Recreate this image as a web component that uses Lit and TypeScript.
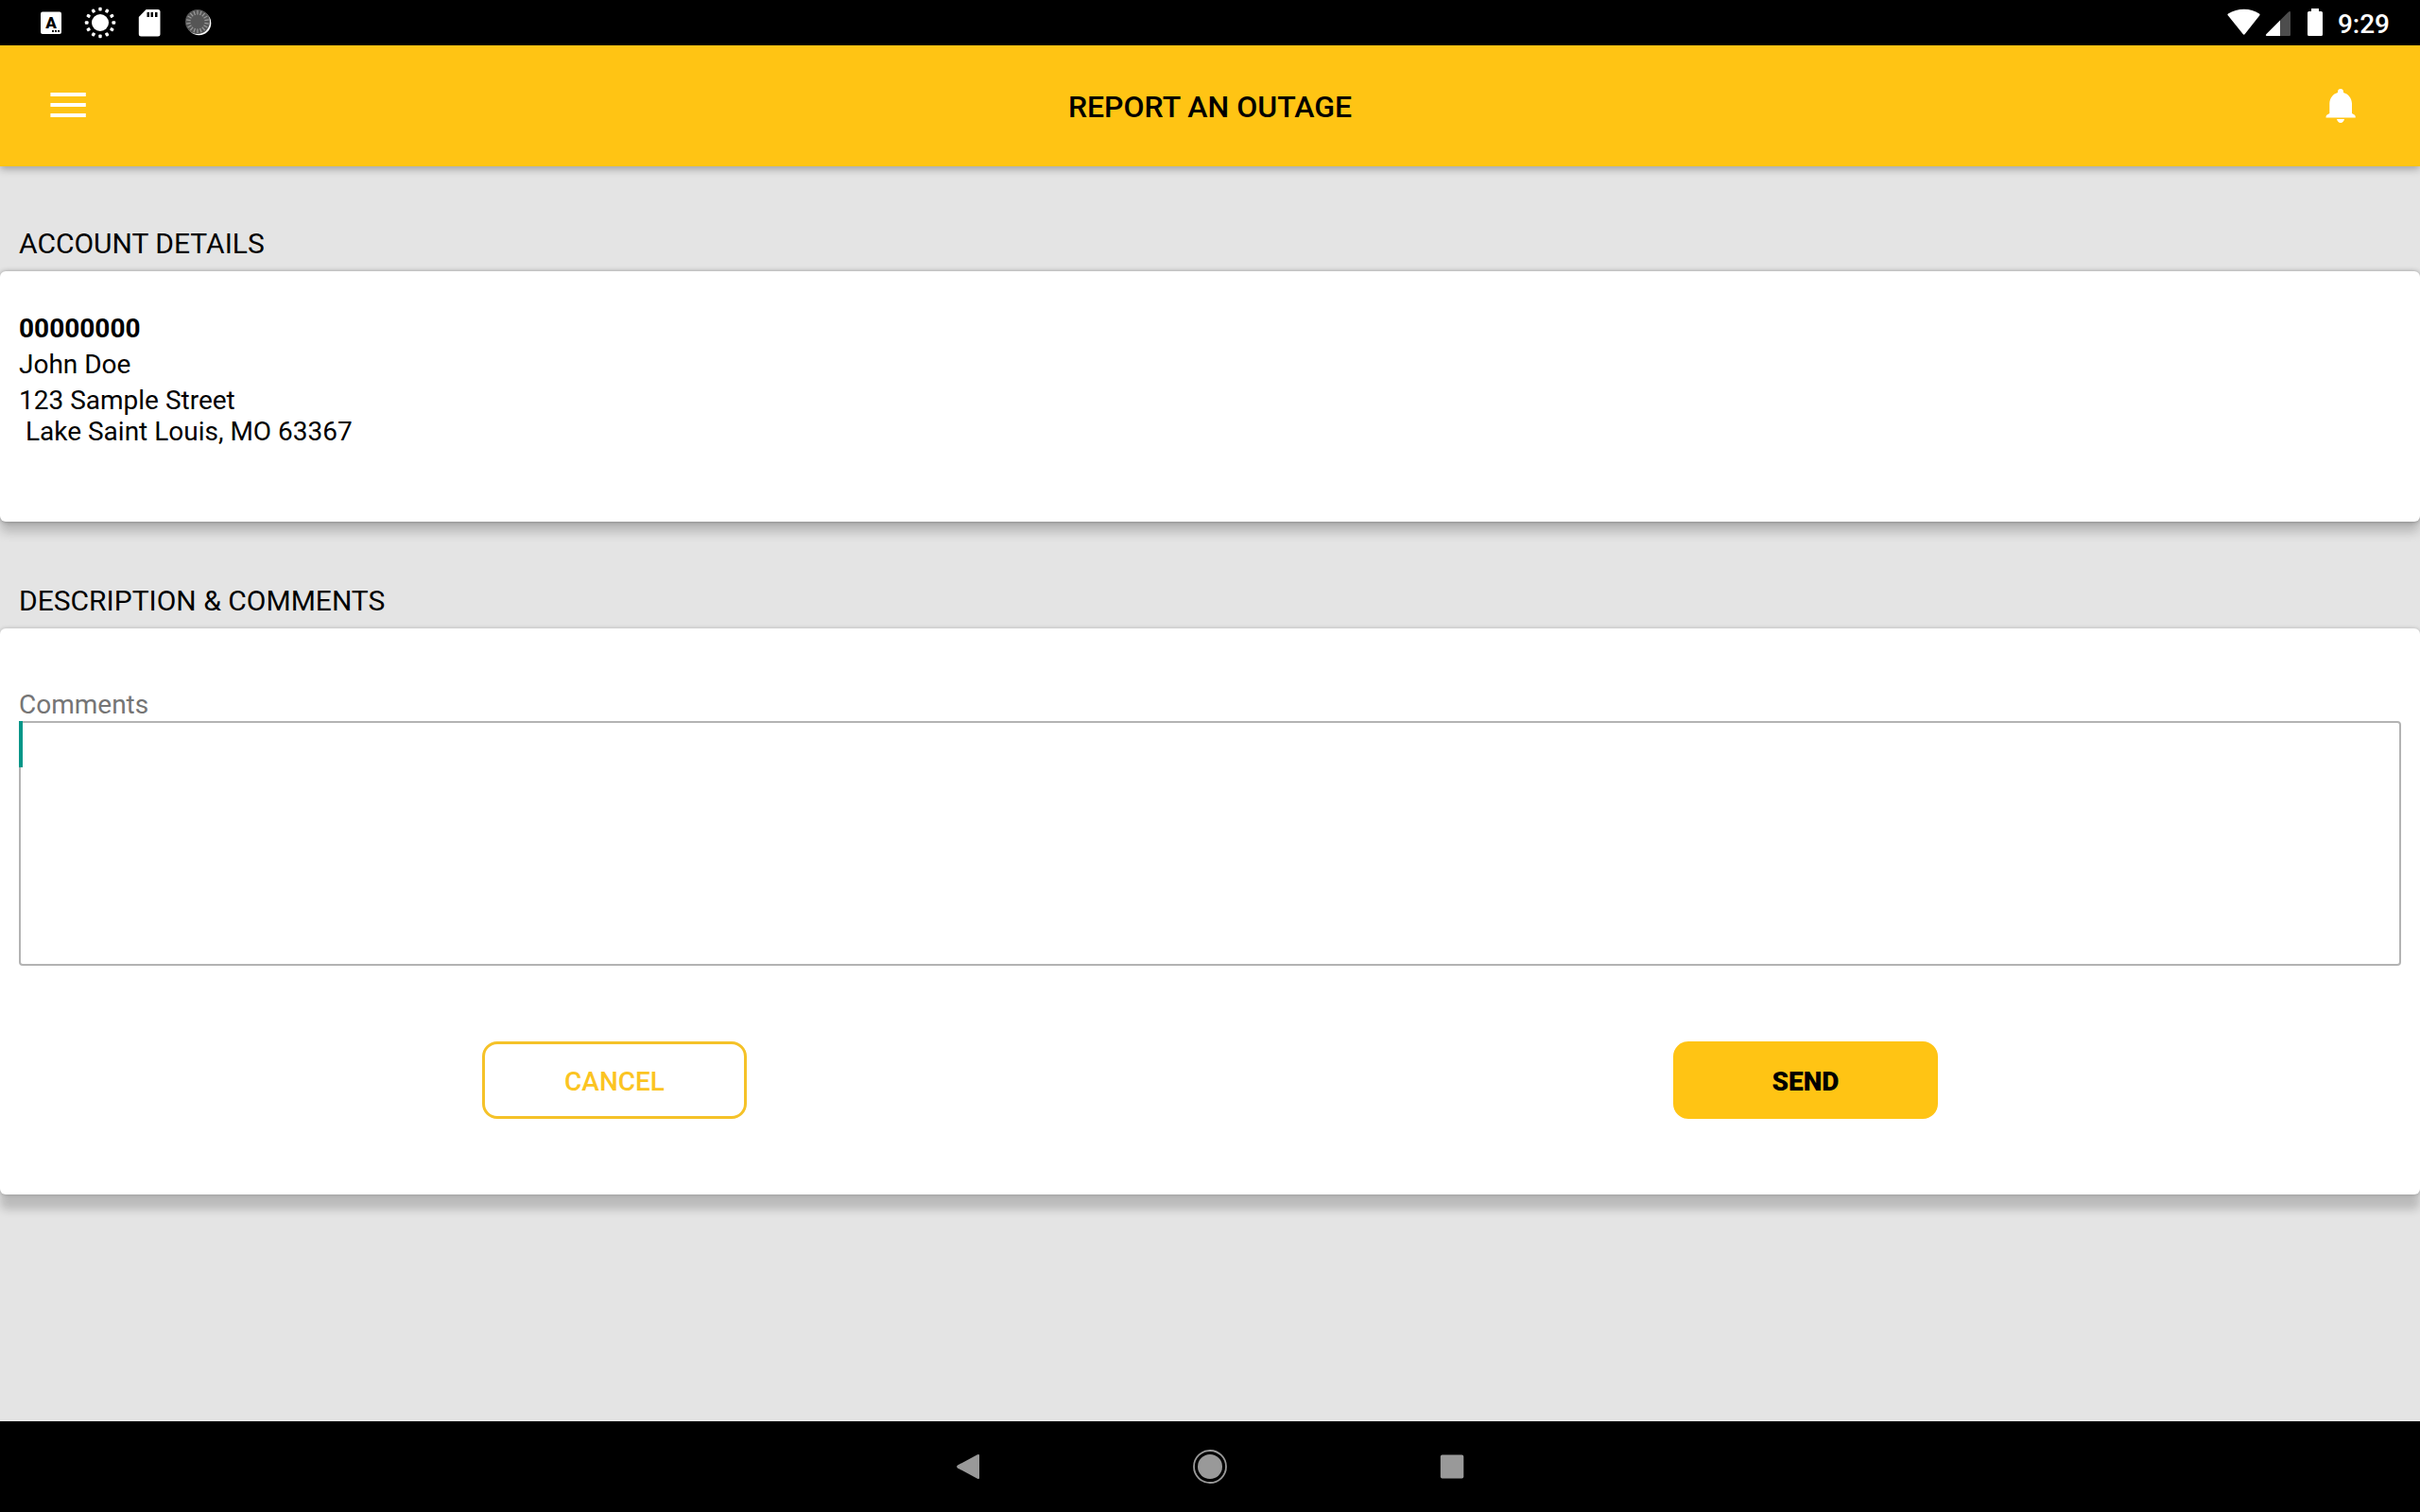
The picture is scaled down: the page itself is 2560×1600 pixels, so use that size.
import { LitElement, html, css, svg } from "lit";
import { customElement, state } from "lit/decorators.js";

const SUN_RAYS = Array.from({ length: 12 }, (_, i) => i * 30);
const MOON_RAYS = Array.from({ length: 18 }, (_, i) => i * 20);

@customElement("status-bar")
class StatusBar extends LitElement {
  static styles = css`
    :host {
      display: block;
      background: #000;
      color: #fff;
    }
    .bar {
      display: flex;
      justify-content: space-between;
      align-items: center;
      height: 48px;
      padding: 0 32px 0 36px;
    }
    .left {
      display: flex;
      gap: 16px;
    }
    .right {
      display: flex;
      align-items: center;
      gap: 4px;
    }
    svg {
      display: block;
    }
    .letter {
      font: 900 17px Roboto, sans-serif;
    }
    .time {
      margin-left: 11px;
      padding-top: 2px;
      font-size: 28px;
      line-height: 33px;
      font-weight: 500;
    }
  `;

  render() {
    return html`
      <div class="bar">
        <div class="left">
          <svg width="36" height="36" viewBox="0 0 36 36" aria-hidden="true">
            <rect x="7" y="6.500" width="22" height="23.500" rx="2" fill="#fff" />
            <text class="letter" x="18" y="23.500" text-anchor="middle" fill="#000">A</text>
            <path d="M19 26h2v2h-2zM22 26h2v2h-2zM25 26h2v2h-2z" fill="#000" />
          </svg>
          <svg width="36" height="36" viewBox="0 0 36 36" aria-hidden="true">
            <circle cx="18" cy="18" r="9" fill="#fff" />
            ${SUN_RAYS.map(
              (a) => svg`<rect x="16.3" y="1.8" width="3.4" height="3.8" rx="1" fill="#fff" transform="rotate(${a} 18 18)"/>`
            )}
          </svg>
          <svg width="36" height="36" viewBox="0 0 36 36" aria-hidden="true">
            <path d="M14.600 4H27a2.500 2.500 0 0 1 2.500 2.500V30a2.500 2.500 0 0 1-2.500 2.500H9.300A2.500 2.500 0 0 1 6.800 30V12z" fill="#fff" />
            <path d="M15.500 7h2.500v5h-2.500zM19.500 7H22v5h-2.500zM24 7h2.500v5H24z" fill="#000" />
          </svg>
          <svg width="36" height="36" viewBox="0 0 36 36" aria-hidden="true">
            <circle cx="18.500" cy="18.500" r="12.800" fill="#fff" />
            <circle cx="17" cy="17" r="13" fill="#555" />
            ${MOON_RAYS.map(
              (a) => svg`<path d="M17 5v4.500" stroke="#999" stroke-width="1.200" transform="rotate(${a} 17 17)"/>`
            )}
          </svg>
        </div>
        <div class="right">
          <svg width="36" height="36" viewBox="0 0 36 36" aria-hidden="true">
            <path d="M1 10.500C.2 9.800.3 9 1 8.500 11 2.200 25 2.200 34 8.500c.8.600.8 1.200.2 2L18.600 30.300c-.5.600-1.200.600-1.700 0z" fill="#fff" />
          </svg>
          <svg width="40" height="36" viewBox="0 0 40 36" aria-hidden="true">
            <path d="M16 15.500 24.500 7q2.500-2 2.500.5V31a1 1 0 0 1-1 1H16z" fill="#4d4d4d" />
            <path d="M16 15.500V32H2q-2-.2-.5-2z" fill="#fff" />
          </svg>
          <svg width="18" height="36" viewBox="0 0 18 36" aria-hidden="true">
            <path d="M5 3h8v3h2.500A1.500 1.500 0 0 1 17 7.500v23a1.500 1.500 0 0 1-1.500 1.500h-13A1.500 1.500 0 0 1 1 30.500v-23A1.500 1.500 0 0 1 2.500 6H5z" fill="#fff" />
          </svg>
          <span class="time">9:29</span>
        </div>
      </div>
    `;
  }
}

@customElement("title-bar")
class TitleBar extends LitElement {
  static styles = css`
    :host {
      display: block;
      position: relative;
      background: #ffc414;
      box-shadow: 0 3px 8px rgba(0, 0, 0, 0.3);
    }
    .bar {
      display: grid;
      grid-template-columns: 80px 1fr 80px;
      align-items: center;
      height: 128px;
      padding: 0 32px;
    }
    .title {
      margin: 0;
      padding-top: 2px;
      text-align: center;
      font-size: 32px;
      line-height: 38px;
      font-weight: 500;
      color: #000;
    }
    .icon {
      display: block;
      width: 80px;
      height: 80px;
      padding: 0;
      border: 0;
      background: none;
      cursor: pointer;
    }
    svg {
      display: block;
    }
  `;

  render() {
    return html`
      <header class="bar">
        <button class="icon" type="button" aria-label="Menu">
          <svg width="80" height="80" viewBox="0 0 80 80">
            <path d="M21.400 26h37.400v4H21.400zM21.400 37h37.400v4H21.400zM21.400 48h37.400v4H21.400z" fill="#fff" />
          </svg>
        </button>
        <h1 class="title">REPORT AN OUTAGE</h1>
        <button class="icon" type="button" aria-label="Notifications">
          <svg width="80" height="80" viewBox="0 0 80 80">
            <path d="M28 22c1.800 0 3 1.300 3 3v.9c5.200 1.400 8.800 5.800 9 11.600V48l2.600 1.600c.8.600 1.200 1.400 1.200 2.900H12.500c0-1.500.4-2.300 1.200-2.900L16.300 48V37.500c.2-5.800 3.600-10.200 8.700-11.600V25c0-1.700 1.200-3 3-3z" fill="#fff" />
            <path d="M24 54h8c-.4 2.400-2 3.900-4 3.900s-3.600-1.500-4-3.900z" fill="#fff" />
          </svg>
        </button>
      </header>
    `;
  }
}

@customElement("nav-bar")
class NavBar extends LitElement {
  static styles = css`
    :host {
      display: block;
      background: #000;
    }
    .bar {
      display: flex;
      justify-content: center;
      align-items: center;
      gap: 176px;
      height: 96px;
    }
    .key {
      width: 80px;
      height: 80px;
      padding: 0;
      border: 0;
      background: none;
      cursor: pointer;
    }
    svg {
      display: block;
    }
  `;

  render() {
    return html`
      <nav class="bar">
        <button class="key" type="button" aria-label="Back">
          <svg width="80" height="80" viewBox="0 0 80 80">
            <path d="M29 38.500 50 27.300q2-.8 2 .8v23.800q0 1.600-2 .8L29 41.500q-1.800-1.500 0-3z" fill="#999" />
          </svg>
        </button>
        <button class="key" type="button" aria-label="Home">
          <svg width="80" height="80" viewBox="0 0 80 80">
            <circle cx="40" cy="40" r="17" fill="none" stroke="#999" stroke-width="1.800" />
            <circle cx="40" cy="40" r="13" fill="#999" />
          </svg>
        </button>
        <button class="key" type="button" aria-label="Overview">
          <svg width="80" height="80" viewBox="0 0 80 80">
            <rect x="27.800" y="27.500" width="24.500" height="25" rx="2" fill="#999" />
          </svg>
        </button>
      </nav>
    `;
  }
}

@customElement("app-root")
class AppRoot extends LitElement {
  static styles = css`
    :host {
      display: flex;
      flex-direction: column;
      min-height: 100vh;
      background: #e4e4e4;
      color: #000;
      font-family: Roboto, sans-serif;
    }
    .content {
      flex: 1;
      padding-top: 64px;
    }
    .section {
      margin-bottom: 66px;
    }
    .heading {
      margin: 0;
      padding: 0 20px 12px;
      font-size: 30px;
      line-height: 35px;
      font-weight: 400;
    }
    .card {
      background: #fff;
      border-radius: 6px;
      font-size: 28px;
      line-height: 33px;
    }
    .account {
      padding: 44px 20px 79px;
      box-shadow:
        0 0 5px rgba(0, 0, 0, 0.35),
        0 11px 12px rgba(0, 0, 0, 0.2);
    }
    .number,
    .name,
    .address {
      margin: 0 0 5px;
    }
    .number {
      font-weight: 700;
    }
    .address {
      margin: 0;
    }
    .form {
      padding: 64px 20px 80px;
      box-shadow:
        0 0 4px rgba(0, 0, 0, 0.22),
        0 16px 10px rgba(0, 0, 0, 0.18);
    }
    .label {
      display: block;
      padding-bottom: 1px;
      color: #757575;
    }
    .field {
      position: relative;
      display: flex;
    }
    .comments {
      flex: 1;
      height: 259px;
      box-sizing: border-box;
      padding: 8px;
      border: 2px solid #b3b3b3;
      border-radius: 4px;
      outline: none;
      resize: none;
      background: #fff;
      color: #000;
      font: 28px/33px Roboto, sans-serif;
      caret-color: #009688;
    }
    .caret {
      position: absolute;
      top: 0;
      left: 0;
      width: 4px;
      height: 49px;
      background: #009688;
      pointer-events: none;
    }
    .actions {
      display: grid;
      grid-template-columns: 1fr 1fr;
      justify-items: center;
      padding-top: 80px;
    }
    .action {
      width: 280px;
      height: 82px;
      padding: 2px 0 0;
      border: 3px solid #ffc414;
      border-radius: 16px;
      font: 500 28px/33px Roboto, sans-serif;
      cursor: pointer;
    }
    .cancel {
      background: #fff;
      border-color: #f5c228;
      color: #fbc422;
    }
    .send {
      background: #ffc414;
      color: #000;
      font-weight: 900;
    }
  `;

  @state() private comments = "";

  private onInput(e: Event) {
    this.comments = (e.target as HTMLTextAreaElement).value;
  }

  private reset() {
    this.comments = "";
  }

  render() {
    return html`
      <status-bar></status-bar>
      <title-bar></title-bar>
      <main class="content">
        <section class="section">
          <h2 class="heading">ACCOUNT DETAILS</h2>
          <div class="card account">
            <p class="number">00000000</p>
            <p class="name">John Doe</p>
            <p class="address">123 Sample Street<br />&nbsp;Lake Saint Louis, MO 63367</p>
          </div>
        </section>
        <section class="section">
          <h2 class="heading">DESCRIPTION &amp; COMMENTS</h2>
          <form class="card form" @submit=${(e: Event) => e.preventDefault()}>
            <label class="label" for="comments">Comments</label>
            <div class="field">
              <textarea
                class="comments"
                id="comments"
                .value=${this.comments}
                @input=${this.onInput}
              ></textarea>
              ${this.comments === "" ? html`<span class="caret"></span>` : null}
            </div>
            <div class="actions">
              <button class="action cancel" type="button" @click=${this.reset}>CANCEL</button>
              <button class="action send" type="submit">SEND</button>
            </div>
          </form>
        </section>
      </main>
      <nav-bar></nav-bar>
    `;
  }
}
